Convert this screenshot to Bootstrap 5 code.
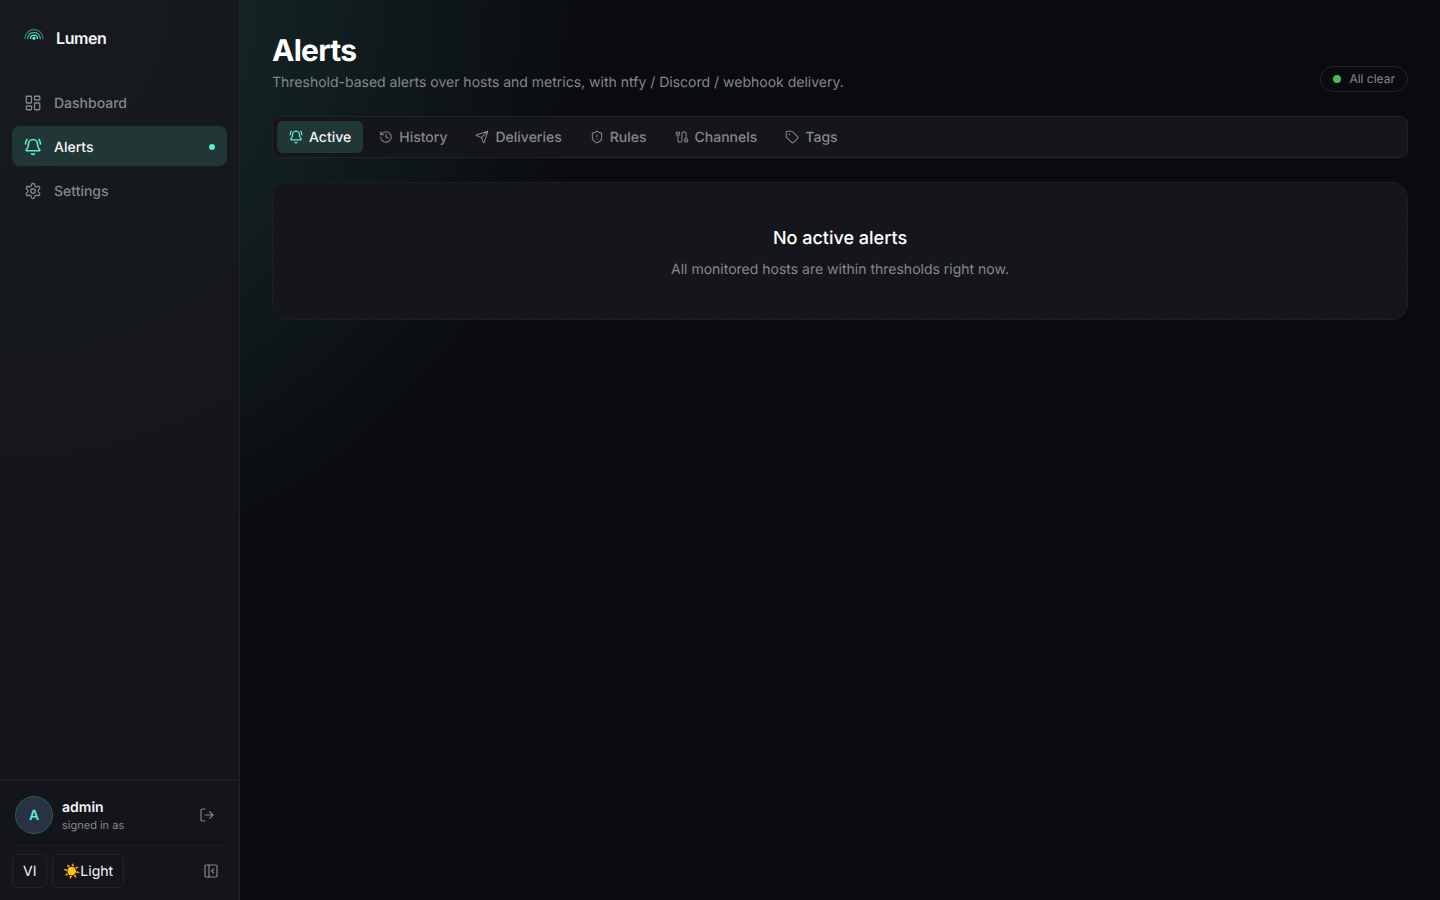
<!DOCTYPE html>
<html lang="en" data-bs-theme="dark">
<head>
<meta charset="utf-8">
<meta name="viewport" content="width=device-width, initial-scale=1">
<title>Lumen – Alerts</title>
<link href="https://cdn.jsdelivr.net/npm/bootstrap@5.3.0/dist/css/bootstrap.min.css" rel="stylesheet">
<style>
:root{--accent:#5eead4;--muted:#86878b;--text:#f4f4f5;--line:#222327;--panel:#15161b}
body{font-family:Inter,"Noto Color Emoji",sans-serif;font-size:14px;line-height:1.5;color:var(--text);text-rendering:geometricPrecision;background:radial-gradient(circle at 0 0,rgba(94,234,212,.18),transparent 600px) #0a0b0f;height:100vh;overflow:hidden}
svg{fill:none;stroke:currentColor;stroke-width:1.75;stroke-linecap:round;stroke-linejoin:round;flex:none}
.sidebar{width:240px;background:rgba(22,23,28,.86);border-right:1px solid var(--line)}
.brand{padding:24px 24px 0;height:82.4px;gap:12px;font-size:16px;font-weight:600;letter-spacing:-.4px}
.brand svg{margin-top:4px}
.brand span{line-height:28px}
.side-nav{gap:4px;padding:0 12px}
.side-nav .nav-link{height:40px;padding:0 12px;gap:12px;border-radius:8px;color:var(--muted);font-weight:500}
.side-nav svg,.side-nav .dot{margin-top:1px}
.side-nav .nav-text{padding-top:2px}
.side-nav .nav-link.active,.tabs .nav-link.active{background:#213735;color:var(--text)}
.active svg{color:var(--accent);stroke-width:2.2}
.dot{width:6px;height:6px;border-radius:50%;background:var(--accent)}
.foot{border-top:2px solid #1c1d22;padding:15px 12px 12px}
.avatar{width:38px;height:38px;margin-left:3px;border:1px solid #285b59;background:#283242;color:var(--accent);font-weight:600}
.who{margin-left:9px}
.who-name{line-height:21px;margin-bottom:-1px}
.who-note{font-size:11px;line-height:16px;color:var(--muted)}
.foot svg{color:var(--muted)}
.foot-row{border-top:1px solid #1d1e23;margin-top:11px;padding-top:8px;gap:4.5px}
.mini{height:34px;border:1px solid var(--line);border-radius:6px;padding:0 10px;color:var(--text)}
.page{padding:32px}
h1{font-size:30px;font-weight:700;letter-spacing:-.75px;line-height:38px;margin-bottom:2px}
.lede{color:var(--muted);line-height:21px;margin-bottom:-1px}
.pill{height:26px;padding:0 12px;gap:8px;border:1px solid var(--line);font-size:12px;color:var(--muted)}
.pill i{width:8px;height:8px;border-radius:50%;background:#51b756}
.tabs{margin-top:24px;padding:4px;gap:4px;background:var(--panel);border:1px solid var(--line);border-radius:8px}
.tabs .nav-link{height:32px;padding:0 12px;gap:6px;border-radius:6px;font-weight:500;color:var(--muted)}
.empty{margin-top:24px;height:138px;background:var(--panel);border:1px dashed var(--line);border-radius:16px}
h2{font-size:18px;font-weight:500;line-height:30px;margin-bottom:5px}
</style>
</head>
<body class="d-flex">
<aside class="sidebar d-flex flex-column flex-shrink-0">
  <div class="brand d-flex align-items-start">
    <svg width="20" height="20" viewBox="0 0 20 20" color="#5eead4"><g stroke-width="1.3"><path d="M1 10.5a9 9 0 0 1 18 0" opacity=".45"/><path d="M3.8 10.5a6.2 6.2 0 0 1 12.4 0" opacity=".75"/><path d="M6.6 10.5a3.4 3.4 0 0 1 6.8 0"/></g><circle cx="10" cy="10.2" r="1.6" fill="#5eead4" stroke="none"/></svg>
    <span>Lumen</span>
  </div>
  <nav class="nav flex-column side-nav">
    <a class="nav-link d-flex align-items-center" href="#"><svg width="18" height="18" viewBox="0 0 24 24"><rect x="3" y="3" width="7" height="9" rx="1"/><rect x="14" y="3" width="7" height="5" rx="1"/><rect x="14" y="12" width="7" height="9" rx="1"/><rect x="3" y="16" width="7" height="5" rx="1"/></svg><span class="nav-text">Dashboard</span></a>
    <a class="nav-link active d-flex align-items-center" href="#"><svg width="18" height="18" viewBox="0 0 24 24"><path d="M10.27 21a2 2 0 0 0 3.46 0M22 8c0-2.3-.8-4.3-2-6M4 2C2.8 3.7 2 5.7 2 8M3.26 15.33A1 1 0 0 0 4 17h16a1 1 0 0 0 .74-1.67C19.41 13.96 18 12.5 18 8A6 6 0 0 0 6 8c0 4.5-1.41 5.96-2.74 7.33"/></svg><span class="nav-text">Alerts</span><span class="dot ms-auto"></span></a>
    <a class="nav-link d-flex align-items-center" href="#"><svg width="18" height="18" viewBox="0 0 24 24"><path d="M12.22 2h-.44a2 2 0 0 0-2 2v.18a2 2 0 0 1-1 1.73l-.43.25a2 2 0 0 1-2 0l-.15-.08a2 2 0 0 0-2.73.73l-.22.38a2 2 0 0 0 .73 2.73l.15.1a2 2 0 0 1 1 1.72v.51a2 2 0 0 1-1 1.74l-.15.09a2 2 0 0 0-.73 2.73l.22.38a2 2 0 0 0 2.73.73l.15-.08a2 2 0 0 1 2 0l.43.25a2 2 0 0 1 1 1.73V20a2 2 0 0 0 2 2h.44a2 2 0 0 0 2-2v-.18a2 2 0 0 1 1-1.73l.43-.25a2 2 0 0 1 2 0l.15.08a2 2 0 0 0 2.73-.73l.22-.39a2 2 0 0 0-.73-2.73l-.15-.08a2 2 0 0 1-1-1.74v-.5a2 2 0 0 1 1-1.74l.15-.09a2 2 0 0 0 .73-2.73l-.22-.38a2 2 0 0 0-2.73-.73l-.15.08a2 2 0 0 1-2 0l-.43-.25a2 2 0 0 1-1-1.73V4a2 2 0 0 0-2-2z"/><circle cx="12" cy="12" r="3"/></svg><span class="nav-text">Settings</span></a>
  </nav>
  <div class="foot mt-auto">
    <div class="d-flex align-items-center">
      <div class="avatar rounded-circle d-flex align-items-center justify-content-center">A</div>
      <div class="who"><div class="who-name fw-semibold">admin</div><div class="who-note">signed in as</div></div>
      <svg class="ms-auto me-2" width="20" height="16" viewBox="0 0 30 24"><path d="M9 21H5a2 2 0 0 1-2-2V5a2 2 0 0 1 2-2h4M16 17l5-5-5-5M21 12H9"/></svg>
    </div>
    <div class="foot-row d-flex align-items-center">
      <div class="mini d-flex align-items-center">VI</div>
      <div class="mini d-flex align-items-center"><span>☀️Light</span></div>
      <svg class="ms-auto me-2" width="16" height="16" viewBox="0 0 24 24"><rect x="3" y="3" width="18" height="18" rx="2"/><path d="M9 3v18M16 15l-3-3 3-3"/></svg>
    </div>
  </div>
</aside>
<main class="page flex-grow-1">
  <header class="d-flex align-items-end justify-content-between">
    <div><h1>Alerts</h1><p class="lede">Threshold-based alerts over hosts and metrics, with ntfy / Discord / webhook delivery.</p></div>
    <span class="pill rounded-pill d-flex align-items-center"><i></i>All clear</span>
  </header>
  <nav class="nav tabs">
    <a class="nav-link active d-flex align-items-center" href="#"><svg width="14" height="14" viewBox="0 0 24 24"><path d="M10.27 21a2 2 0 0 0 3.46 0M22 8c0-2.3-.8-4.3-2-6M4 2C2.8 3.7 2 5.7 2 8M3.26 15.33A1 1 0 0 0 4 17h16a1 1 0 0 0 .74-1.67C19.41 13.96 18 12.5 18 8A6 6 0 0 0 6 8c0 4.5-1.41 5.96-2.74 7.33"/></svg>Active</a>
    <a class="nav-link d-flex align-items-center" href="#"><svg width="14" height="14" viewBox="0 0 24 24"><path d="M3 12a9 9 0 1 0 9-9 9.75 9.75 0 0 0-6.74 2.74L3 8M3 3v5h5M12 7v5l4 2"/></svg>History</a>
    <a class="nav-link d-flex align-items-center" href="#"><svg width="14" height="14" viewBox="0 0 24 24"><path d="M14.54 21.69a.5.5 0 0 0 .93-.03l6.5-19a.5.5 0 0 0-.63-.63l-19 6.5a.5.5 0 0 0-.03.93l7.93 3.18a2 2 0 0 1 1.11 1.11zM21.85 2.15 10.91 13.09"/></svg>Deliveries</a>
    <a class="nav-link d-flex align-items-center" href="#"><svg width="14" height="14" viewBox="0 0 24 24"><path d="M20 13c0 5-3.5 7.5-7.66 8.95a1 1 0 0 1-.67-.01C7.5 20.5 4 18 4 13V6a1 1 0 0 1 1-1c2 0 4.5-1.2 6.24-2.72a1.17 1.17 0 0 1 1.52 0C14.51 3.81 17 5 19 5a1 1 0 0 1 1 1zM12 8v4M12 16h.01"/></svg>Rules</a>
    <a class="nav-link d-flex align-items-center" href="#"><svg width="14" height="14" viewBox="0 0 24 24"><path d="M17 21v-2a1 1 0 0 1-1-1v-1a2 2 0 0 1 2-2h2a2 2 0 0 1 2 2v1a1 1 0 0 1-1 1v2M19 15V6.5a1 1 0 0 0-7 0v11a1 1 0 0 1-7 0V9M21 21v-2h-4M3 5h4V3M7 5a1 1 0 0 1 1 1v1a2 2 0 0 1-2 2H4a2 2 0 0 1-2-2V6a1 1 0 0 1 1-1V3"/></svg>Channels</a>
    <a class="nav-link d-flex align-items-center" href="#"><svg width="14" height="14" viewBox="0 0 24 24"><path d="M12.59 2.59A2 2 0 0 0 11.17 2H4a2 2 0 0 0-2 2v7.17a2 2 0 0 0 .59 1.42l8.7 8.7a2.43 2.43 0 0 0 3.42 0l6.58-6.58a2.43 2.43 0 0 0 0-3.42z"/><circle cx="7.5" cy="7.5" r=".5" fill="currentColor"/></svg>Tags</a>
  </nav>
  <section class="empty d-flex flex-column align-items-center justify-content-center text-center">
    <h2>No active alerts</h2>
    <p class="lede">All monitored hosts are within thresholds right now.</p>
  </section>
</main>
<script src="https://cdn.jsdelivr.net/npm/bootstrap@5.3.0/dist/js/bootstrap.bundle.min.js"></script>
</body>
</html>
